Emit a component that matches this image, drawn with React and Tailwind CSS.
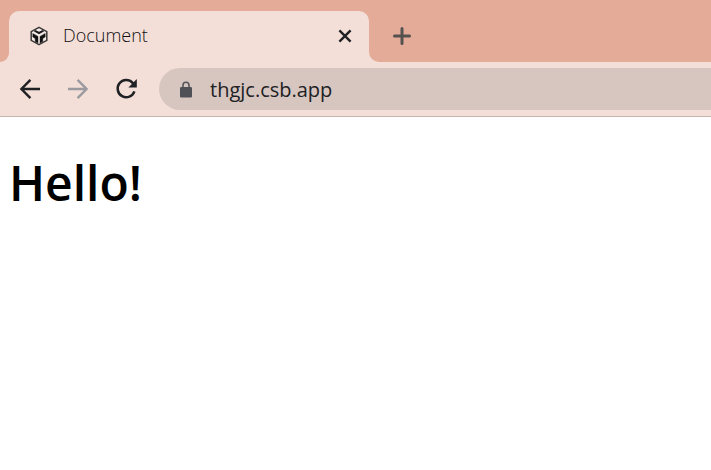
function BoxLogo() {
  return (
    <svg viewBox="0 0 18 20" className="h-5 w-[18px] shrink-0" aria-hidden="true">
      <path d="M9 1.3 16.8 5.6V14.4L9 18.7 1.2 14.4V5.6Z" fill="#f4ebe8" stroke="#3c3a39" strokeWidth="1.5" strokeLinejoin="round" />
      <path d="M5.4 4.4 9 6.3 12.6 4.4 13.6 5.2 9 7.8 4.4 5.2Z" fill="#111111" stroke="#111111" strokeWidth="0.8" />
      <path d="M2.8 7.4 8 10.4V17L5.2 15.4V12.4L2.8 11Z" fill="#111111" stroke="#111111" strokeWidth="0.4" />
      <path d="M15.2 7.4 10 10.4V17L12.8 15.4V12.4L15.2 11Z" fill="#111111" stroke="#111111" strokeWidth="0.4" />
    </svg>
  );
}

function ArrowIcon({ className }) {
  return (
    <svg viewBox="0 0 24 24" className={className} fill="none" stroke="currentColor" strokeWidth="2.4" aria-hidden="true">
      <path d="M22 12H3.6M12.4 2.8 3.4 12l9 9.2" />
    </svg>
  );
}

function ReloadIcon() {
  return (
    <svg viewBox="0 0 24 24" className="size-6" fill="none" aria-hidden="true">
      <path d="M20.4 14.4A8.6 8.6 0 1 1 18.6 5.8L20.6 7.8" stroke="#202124" strokeWidth="2.5" />
      <path d="M22.8 2V10.4H14.4Z" fill="#202124" />
    </svg>
  );
}

function CloseIcon() {
  return (
    <svg viewBox="0 0 16 16" className="size-4" stroke="#202124" strokeWidth="2.4" aria-hidden="true">
      <path d="m2.4 2.4 11.2 11.2M13.6 2.4 2.4 13.6" />
    </svg>
  );
}

function PlusIcon() {
  return (
    <svg viewBox="0 0 20 20" className="size-5" stroke="#555250" strokeWidth="3" strokeLinecap="round" aria-hidden="true">
      <path d="M10 2.5v15M2.5 10h15" />
    </svg>
  );
}

function LockIcon() {
  return (
    <svg viewBox="0 0 12 18" className="h-[18px] w-3 shrink-0" aria-hidden="true">
      <path d="M3 7.6V5.2a3 3 0 0 1 6 0v2.4" fill="none" stroke="#55565b" strokeWidth="1.6" />
      <rect y="7" width="12" height="10.5" rx="1.3" fill="#4f5156" />
    </svg>
  );
}

export default function App() {
  return (
    <div className="min-h-screen bg-white font-['Open_Sans',sans-serif]">
      <header className="border-b border-[#c5b3ae] bg-[#f4dfd8]">
        <div className="h-[11px] bg-[#e4ab99]" />
        <div className="flex h-[51px]">
          <div className="w-[9px] shrink-0 rounded-br-[10px] bg-[#e4ab99]" />
          <div className="w-[360px] bg-[#e4ab99]">
            <div className="flex h-full items-center rounded-t-[10px] bg-[#f4dfd8] pr-4 pb-px pl-[21px]">
              <BoxLogo />
              <span className="ml-[15px] flex-1 pb-[2px] text-lg font-light text-[#101012]">Document</span>
              <button type="button" aria-label="Close tab">
                <CloseIcon />
              </button>
            </div>
          </div>
          <div className="flex flex-1 items-center rounded-bl-[10px] bg-[#e4ab99] pb-px pl-[23px]">
            <button type="button" aria-label="New tab">
              <PlusIcon />
            </button>
          </div>
        </div>
        <nav className="flex h-[54px] items-center pl-[18px]">
          <div className="flex items-center gap-6 pb-px">
            <button type="button" aria-label="Back" className="text-[#202124]">
              <ArrowIcon className="size-6" />
            </button>
            <button type="button" aria-label="Forward" className="text-[#9b9a9f]">
              <ArrowIcon className="size-6 rotate-180" />
            </button>
            <button type="button" aria-label="Reload">
              <ReloadIcon />
            </button>
          </div>
          <div className="ml-[21px] flex h-[42px] flex-1 items-center rounded-l-full bg-[#d7c6bf] pl-[21px]">
            <LockIcon />
            <input
              type="text"
              aria-label="Address"
              defaultValue="thgjc.csb.app"
              className="ml-[18px] min-w-0 flex-1 bg-transparent pt-[2px] text-xl text-[#202124] outline-none"
            />
          </div>
        </nav>
      </header>
      <main className="px-[9px] pt-8">
        <h1 className="text-5xl/[68px] font-semibold text-black">Hello!</h1>
      </main>
    </div>
  );
}
